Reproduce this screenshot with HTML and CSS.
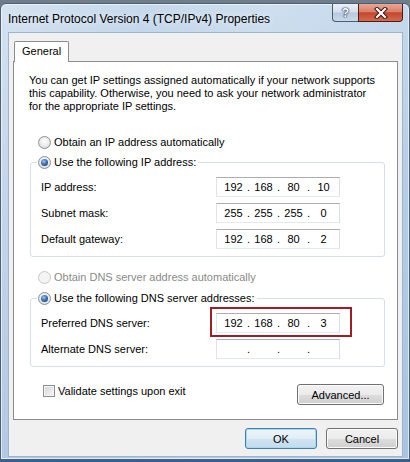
FILE: index.html
```html
<html>
<head>
    <title>Internet Protocol Version 4 (TCP/IPv4) Properties</title>
    <link rel="stylesheet" href="styles.css">
</head>
<body>
    <div class="window">
        <div class="titlebar">
            <span class="title">Internet Protocol Version 4 (TCP/IPv4) Properties</span>
            <div class="caption">
                <span class="cap help">?</span>
                <span class="cap close">
                    <svg width="14" height="12" viewBox="0 0 14 12">
                        <path d="M3 2 L11 10 M11 2 L3 10" stroke="#3a1612" stroke-width="4.2" stroke-linecap="square"/>
                        <path d="M3 2 L11 10 M11 2 L3 10" stroke="#fff" stroke-width="2.2" stroke-linecap="square"/>
                    </svg>
                </span>
            </div>
        </div>

        <div class="client">
            <div class="tabs"><span class="tab">General</span></div>

            <div class="panel">
                <p class="intro">You can get IP settings assigned automatically if your network supports<br>this capability. Otherwise, you need to ask your network administrator<br>for the appropriate IP settings.</p>

                <label class="option first"><span class="radio"></span>Obtain an IP address automatically</label>

                <fieldset class="group">
                    <legend><label class="option"><span class="radio checked"></span>Use the following IP address:</label></legend>
                    <div class="field-row">
                        <span class="field-label">IP address:</span>
                        <span class="ipbox"><span class="octet">192</span><span class="dot">.</span><span class="octet">168</span><span class="dot">.</span><span class="octet">80</span><span class="dot">.</span><span class="octet">10</span></span>
                    </div>
                    <div class="field-row">
                        <span class="field-label">Subnet mask:</span>
                        <span class="ipbox"><span class="octet">255</span><span class="dot">.</span><span class="octet">255</span><span class="dot">.</span><span class="octet">255</span><span class="dot">.</span><span class="octet">0</span></span>
                    </div>
                    <div class="field-row">
                        <span class="field-label">Default gateway:</span>
                        <span class="ipbox"><span class="octet">192</span><span class="dot">.</span><span class="octet">168</span><span class="dot">.</span><span class="octet">80</span><span class="dot">.</span><span class="octet">2</span></span>
                    </div>
                </fieldset>

                <label class="option dns-auto disabled"><span class="radio"></span>Obtain DNS server address automatically</label>

                <fieldset class="group dns">
                    <legend><label class="option"><span class="radio checked"></span>Use the following DNS server addresses:</label></legend>
                    <div class="field-row">
                        <span class="field-label">Preferred DNS server:</span>
                        <span class="ipbox marked"><span class="octet">192</span><span class="dot">.</span><span class="octet">168</span><span class="dot">.</span><span class="octet">80</span><span class="dot">.</span><span class="octet">3</span></span>
                    </div>
                    <div class="field-row">
                        <span class="field-label">Alternate DNS server:</span>
                        <span class="ipbox"><span class="octet"></span><span class="dot">.</span><span class="octet"></span><span class="dot">.</span><span class="octet"></span><span class="dot">.</span><span class="octet"></span></span>
                    </div>
                </fieldset>

                <div class="panel-footer">
                    <label class="check-row"><span class="checkbox"></span>Validate settings upon exit</label>
                    <button class="btn advanced">Advanced...</button>
                </div>
            </div>

            <div class="dialog-buttons">
                <button class="btn default">OK</button>
                <button class="btn">Cancel</button>
            </div>
        </div>
    </div>
</body>
</html>
```

FILE: styles.css
```css
* {
    box-sizing: border-box;
}

body {
    margin: 0;
    width: 410px;
    height: 462px;
    overflow: hidden;
    background: linear-gradient(#6f7c8a 0, #6f7c8a 12px, #35618f 440px);
    font-family: 'Liberation Sans', Arial, sans-serif;
    font-size: 11px;
    color: #000;
}

.window {
    margin-top: 3px;
    border: 1px solid #4d6075;
    border-radius: 6px 6px 0 0;
    padding: 0 6px 2px 7px;
    background: linear-gradient(100deg, rgba(255,255,255,0.25) 0%, rgba(255,255,255,0) 30%, rgba(255,255,255,0.15) 55%, rgba(255,255,255,0) 80%),
                linear-gradient(#c6d9ec, #b6cde6 40%, #a9c3e1);
    box-shadow: inset 0 0 0 1px rgba(255,255,255,0.6);
}

.titlebar {
    display: flex;
    height: 28px;
}

.title {
    padding-top: 9px;
    line-height: 13px;
    font-size: 12px;
    text-shadow: 0 0 6px rgba(255,255,255,0.9);
}

.caption {
    margin-left: auto;
    display: flex;
    height: 18px;
}

.cap {
    display: flex;
    align-items: center;
    justify-content: center;
    border: 1px solid #4c5d73;
    border-top: none;
}

.help {
    width: 26px;
    border-right: none;
    border-radius: 0 0 0 4px;
    background: linear-gradient(#e9f0f7, #d3dfec 48%, #b8c9dc 52%, #c9d9ea);
    color: #fff;
    font-weight: bold;
    font-size: 12px;
    text-shadow: 0 0 1px #26384c, 0 0 1px #26384c, 0 0 2px #26384c;
}

.close {
    width: 45px;
    border-color: #4a1d16;
    border-radius: 0 0 4px 0;
    background: linear-gradient(#eaa795, #d98068 45%, #c5452d 52%, #d36c50);
}

.client {
    border: 1px solid #9fb4cb;
    background: #f0f0f0;
    padding: 8px 4px 7px 4px;
}

.tabs {
    display: flex;
    padding-left: 1px;
}

.tab {
    height: 21px;
    padding: 0 7px;
    line-height: 19px;
    border: 1px solid #898c95;
    border-bottom: none;
    border-radius: 2px 2px 0 0;
    background: #fff;
    margin-bottom: -1px;
    position: relative;
    z-index: 1;
}

.panel {
    border: 1px solid #898c95;
    background: #fff;
    padding: 12px 12px 14px 16px;
}

.intro {
    margin: 0 0 0 -1px;
    line-height: 13px;
}

.option {
    display: flex;
    align-items: center;
    height: 16px;
}

.option.first {
    margin-top: 21px;
    padding-left: 8px;
}

.option.dns-auto {
    margin-top: 12px;
    padding-left: 8px;
}

.option.disabled {
    color: #8a8a8a;
}

.radio {
    position: relative;
    flex: none;
    width: 13px;
    height: 13px;
    margin-right: 3px;
    border: 1px solid #8e8f8f;
    border-radius: 50%;
    background: radial-gradient(circle at 50% 40%, #ffffff, #eeeeee 45%, #cfcfcf);
}

.radio.checked::after {
    content: "";
    position: absolute;
    left: 2px;
    top: 2px;
    width: 7px;
    height: 7px;
    border-radius: 50%;
    background: radial-gradient(circle at 40% 35%, #9cc2ee, #2f64a8 55%, #17376a);
}

.disabled .radio {
    border-color: #c6c6c6;
    background: #f4f4f4;
}

.group {
    margin: 4px 0 0 0;
    padding: 7px 0 7px 0;
    border: 1px solid #d5dfe5;
    border-radius: 3px;
    min-width: 0;
}

.group.dns {
    margin-top: 5px;
}

.group legend {
    margin-left: 6px;
    padding: 0 2px 0 1px;
}

.field-row {
    display: flex;
    align-items: center;
    height: 20px;
    padding-left: 10px;
}

.field-row + .field-row {
    margin-top: 6px;
}

.field-label {
    width: 175px;
}

.ipbox {
    position: relative;
    display: flex;
    align-items: center;
    width: 124px;
    height: 20px;
    padding-left: 5px;
    border: 1px solid;
    border-color: #abadb3 #dbdfe6 #e3e9ef #e2e3ea;
    background: #fff;
}

.octet {
    width: 23px;
    text-align: center;
}

.dot {
    width: 7px;
    text-align: center;
}

.ipbox.marked::after {
    content: "";
    position: absolute;
    left: -7px;
    right: -13px;
    top: -7px;
    bottom: -5px;
    border: 2px solid #9e1e25;
}

.panel-footer {
    display: flex;
    justify-content: space-between;
    align-items: flex-start;
    margin-top: 17px;
    padding: 0 1px 0 13px;
}

.check-row {
    display: flex;
    align-items: center;
    height: 14px;
}

.checkbox {
    width: 12px;
    height: 12px;
    margin-right: 3px;
    border: 1px solid #8e8f8f;
    background: linear-gradient(135deg, #d2d4d7, #f7f7f7);
    box-shadow: inset 0 0 0 1px #f4f4f4;
}

.btn {
    height: 21px;
    width: 72px;
    padding: 0;
    font-family: 'Liberation Sans', Arial, sans-serif;
    font-size: 11px;
    color: #000;
    border: 1px solid #707070;
    border-radius: 3px;
    background: linear-gradient(#f2f2f2, #ebebeb 50%, #dddddd 51%, #cfcfcf);
    box-shadow: inset 0 0 0 1px #fbfbfb;
}

.btn.advanced {
    width: 87px;
}

.btn.default {
    border-color: #3c7fb1;
    background: linear-gradient(#eef5fa, #e1edf5 50%, #d1e4f0 51%, #c3dbea);
    box-shadow: inset 0 0 0 1px #a9d8f3;
}

.dialog-buttons {
    display: flex;
    justify-content: flex-end;
    gap: 9px;
    margin-top: 8px;
}
```
